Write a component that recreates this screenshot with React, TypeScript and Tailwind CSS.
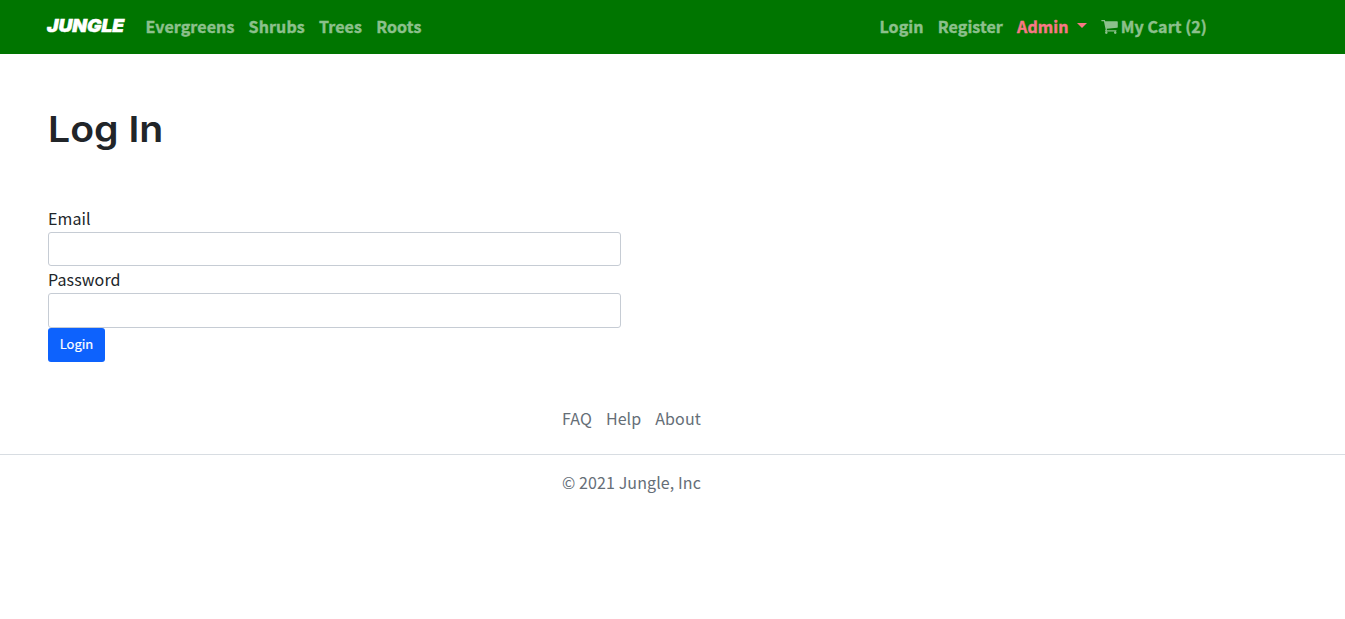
const categories = ["Evergreens", "Shrubs", "Trees", "Roots"];
const footerLinks = ["FAQ", "Help", "About"];

function CartIcon() {
  return (
    <svg viewBox="0 256 1664 1408" className="mt-px mr-[3px] h-[14px] w-[17px]" fill="currentColor" aria-hidden="true">
      <path d="M640 1536q0 52-38 90t-90 38-90-38-38-90 38-90 90-38 90 38 38 90zm896 0q0 52-38 90t-90 38-90-38-38-90 38-90 90-38 90 38 38 90zm128-1088v512q0 24-16.5 42.5t-40.5 21.5l-1044 122q13 60 13 70 0 16-24 64h920q26 0 45 19t19 45-19 45-45 19h-1024q-26 0-45-19t-19-45q0-11 8-31.5t16-36 21.5-40 15.5-29.5l-177-823h-204q-26 0-45-19t-19-45 19-45 45-19h256q16 0 28.5 6.5t19.5 15.5 13 24.5 8 26 5.5 29.5 4.5 26h1201q26 0 45 19t19 45z" />
    </svg>
  );
}

function Navbar() {
  return (
    <nav className="flex h-[54px] items-center bg-[#007500] pr-[138px] pb-[2px] pl-[47px] text-[16px] leading-[24px] font-bold text-[#8cc08c]">
      <a
        href="#"
        className="mr-[26.5px] -mt-px w-[72px] origin-left scale-x-[1.065] font-['Inter'] text-[18px] font-black text-white italic [-webkit-text-stroke:0.5px_white]"
      >
        JUNGLE
      </a>
      <ul className="flex gap-[14.2px] tracking-[0.1px] [-webkit-text-stroke:0.4px]">
        {categories.map((name) => (
          <li key={name}>
            <a href="#">{name}</a>
          </li>
        ))}
      </ul>
      <ul className="ml-auto flex gap-[14.2px] tracking-[0.08px]">
        <li className="[-webkit-text-stroke:0.4px_#8cc08c]">
          <a href="#">Login</a>
        </li>
        <li className="[-webkit-text-stroke:0.4px_#8cc08c]">
          <a href="#">Register</a>
        </li>
        <li>
          <a href="#" className="flex items-center text-[#f77885] [-webkit-text-stroke:0.4px_#f77885]">
            Admin
            <span className="-mt-[2px] ml-[8px] border-x-[5px] border-t-[5px] border-x-transparent border-t-[#f77885]" />
          </a>
        </li>
        <li>
          <a href="#" className="flex items-center [-webkit-text-stroke:0.4px_#8cc08c]">
            <CartIcon />
            My Cart (2)
          </a>
        </li>
      </ul>
    </nav>
  );
}

export default function App() {
  return (
    <div className="min-h-[619px] bg-white font-['Noto_Sans_CJK_SC',sans-serif] text-[16px] leading-[27px] text-[#212529]">
      <Navbar />
      <main className="px-[48px] pt-[53px]">
        <h1 className="origin-left scale-x-[1.09] font-['Inter'] text-[36px] leading-[44px] font-semibold">Log In</h1>
        <form className="mt-[54px] flex w-[573px] flex-col items-start tracking-[0.1px]">
          <label htmlFor="email" className="h-[27px]">Email</label>
          <input id="email" type="email" className="h-[34px] w-full rounded-[3px] border border-[#c6ccd4] px-3" />
          <label htmlFor="password" className="h-[27px]">Password</label>
          <input id="password" type="password" className="h-[35px] w-full rounded-[3px] border border-[#c6ccd4] px-3" />
          <button type="button" className="h-[34px] w-[57px] rounded-[3px] bg-[#0d62fd] pb-[2px] text-[13px] leading-[20px] tracking-normal text-white [-webkit-text-stroke:0.2px_white]">
            Login
          </button>
        </form>
      </main>
      <footer className="mt-[43px] tracking-[0.1px] text-[#656e77]">
        <ul className="flex h-[50px] gap-[14px] border-b border-[#d8dde2] pl-[562px]">
          {footerLinks.map((name) => (
            <li key={name}>
              <a href="#">{name}</a>
            </li>
          ))}
        </ul>
        <p className="mt-[14px] pl-[562px]">© 2021 Jungle, Inc</p>
      </footer>
    </div>
  );
}
